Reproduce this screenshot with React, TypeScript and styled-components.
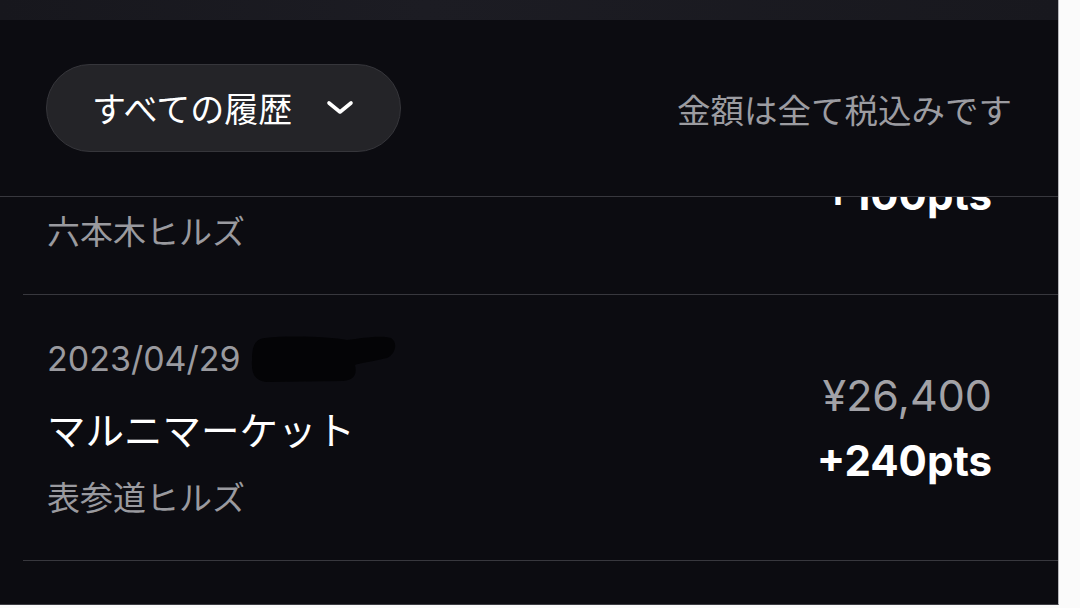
import React, { useLayoutEffect, useRef } from 'react'
import styled, { createGlobalStyle } from 'styled-components'

const GlobalStyle = createGlobalStyle`
  html, body {
    margin: 0;
    padding: 0;
    background: #fbfbfb;
  }
  body {
    font-family: Inter, "Noto Sans CJK JP", sans-serif;
    -webkit-font-smoothing: antialiased;
  }
`

const Page = styled.div`
  width: 1080px;
  height: 608px;
  display: flex;
  align-items: flex-start;
  overflow: hidden;
`

const Panel = styled.div`
  width: 1058px;
  height: 604px;
  display: flex;
  flex-direction: column;
  background: #0c0c11;
  border-right: 1px solid #b8b8bc;
  border-bottom: 1px solid #3c3c42;
  overflow: hidden;
`

const TopBar = styled.div`
  height: 20px;
  flex-shrink: 0;
  background: linear-gradient(90deg, #17171d 0%, #1c1c23 40%, #18181e 100%);
`

const Header = styled.div`
  height: 176px;
  flex-shrink: 0;
  display: flex;
  align-items: center;
  justify-content: space-between;
  padding: 0 46px;
  border-bottom: 1px solid #38383e;
`

const FilterButton = styled.button`
  height: 88px;
  display: flex;
  align-items: center;
  gap: 34px;
  padding: 0 46px 0 45px;
  border-radius: 44px;
  border: 1px solid #36363b;
  background: #242428;
  color: #ffffff;
  font-family: "Noto Sans CJK JP", sans-serif;
  font-size: 34px;
  line-height: 1;
  cursor: pointer;
`

const TaxNote = styled.span`
  font-family: "Noto Sans CJK JP", sans-serif;
  font-size: 33.5px;
  color: #9c9ca1;
`

const List = styled.div`
  flex: 1;
  overflow: hidden;
  padding-bottom: 200px;
`

const Row = styled.div`
  margin-left: 23px;
  padding: 42px 66px 42px 24px;
  display: flex;
  align-items: center;
  justify-content: space-between;
  border-bottom: 1px solid #38383e;
`

const Info = styled.div`
  display: flex;
  flex-direction: column;
  gap: 23px;
`

const DateLine = styled.div`
  display: flex;
  align-items: center;
  gap: 10px;
  height: 44px;
`

const DateText = styled.span`
  font-family: Inter, sans-serif;
  font-size: 34px;
  line-height: 1.3;
  color: #9a9a9f;
`

const ShopName = styled.span`
  font-family: "Noto Sans CJK JP", sans-serif;
  font-size: 38.5px;
  line-height: 1.25;
  color: #ffffff;
`

const Place = styled.span`
  font-family: "Noto Sans CJK JP", sans-serif;
  font-size: 33px;
  line-height: 1.3;
  color: #9a9a9f;
`

const Amounts = styled.div`
  display: flex;
  flex-direction: column;
  align-items: flex-end;
  gap: 12px;
`

const Price = styled.span`
  font-family: Inter, sans-serif;
  font-size: 43px;
  line-height: 1.27;
  color: #a2a2a7;
`

const Points = styled.span`
  font-family: Inter, sans-serif;
  font-size: 42px;
  font-weight: 700;
  line-height: 1.27;
  color: #ffffff;
`

const Chevron = () => (
  <svg width="28" height="16" viewBox="0 0 28 16" fill="none">
    <path d="M3 3 L14 12 L25 3" stroke="#ffffff" strokeWidth="3.6" strokeLinecap="round" strokeLinejoin="round" />
  </svg>
)

// hand-drawn marker over the time of the purchase
const Redaction = () => (
  <svg width="146" height="50" viewBox="0 0 146 50">
    <path
      d="M14 4 C40 1 80 3 96 6 C112 4 130 1 140 4 C147 8 145 20 136 24 C120 28 108 29 104 31 C106 40 104 46 92 47 L16 48 C4 47 0 40 1 26 C1 12 4 5 14 4 Z"
      fill="#040406"
    />
  </svg>
)

type Item = {
  date: string
  shop: string
  place: string
  price: string
  points: string
  redacted?: boolean
}

const items: Item[] = [
  { date: '2023/05/03', shop: 'ビオセボン', place: '六本木ヒルズ', price: '¥11,000', points: '+100pts' },
  { date: '2023/04/29', shop: 'マルニマーケット', place: '表参道ヒルズ', price: '¥26,400', points: '+240pts', redacted: true },
]

const HistoryRow = ({ item }: { item: Item }) => (
  <Row>
    <Info>
      <DateLine>
        <DateText>{item.date}</DateText>
        {item.redacted && <Redaction />}
      </DateLine>
      <ShopName>{item.shop}</ShopName>
      <Place>{item.place}</Place>
    </Info>
    <Amounts>
      <Price>{item.price}</Price>
      <Points>{item.points}</Points>
    </Amounts>
  </Row>
)

const App = () => {
  const listRef = useRef<HTMLDivElement>(null)

  // the list is shown scrolled, with the first entry half under the header
  useLayoutEffect(() => {
    if (listRef.current) listRef.current.scrollTop = 168
  }, [])

  return (
    <Page>
      <GlobalStyle />
      <Panel>
        <TopBar />
        <Header>
          <FilterButton>
            すべての履歴
            <Chevron />
          </FilterButton>
          <TaxNote>金額は全て税込みです</TaxNote>
        </Header>
        <List ref={listRef}>
          {items.map((item) => (
            <HistoryRow key={item.date} item={item} />
          ))}
        </List>
      </Panel>
    </Page>
  )
}

export default App
